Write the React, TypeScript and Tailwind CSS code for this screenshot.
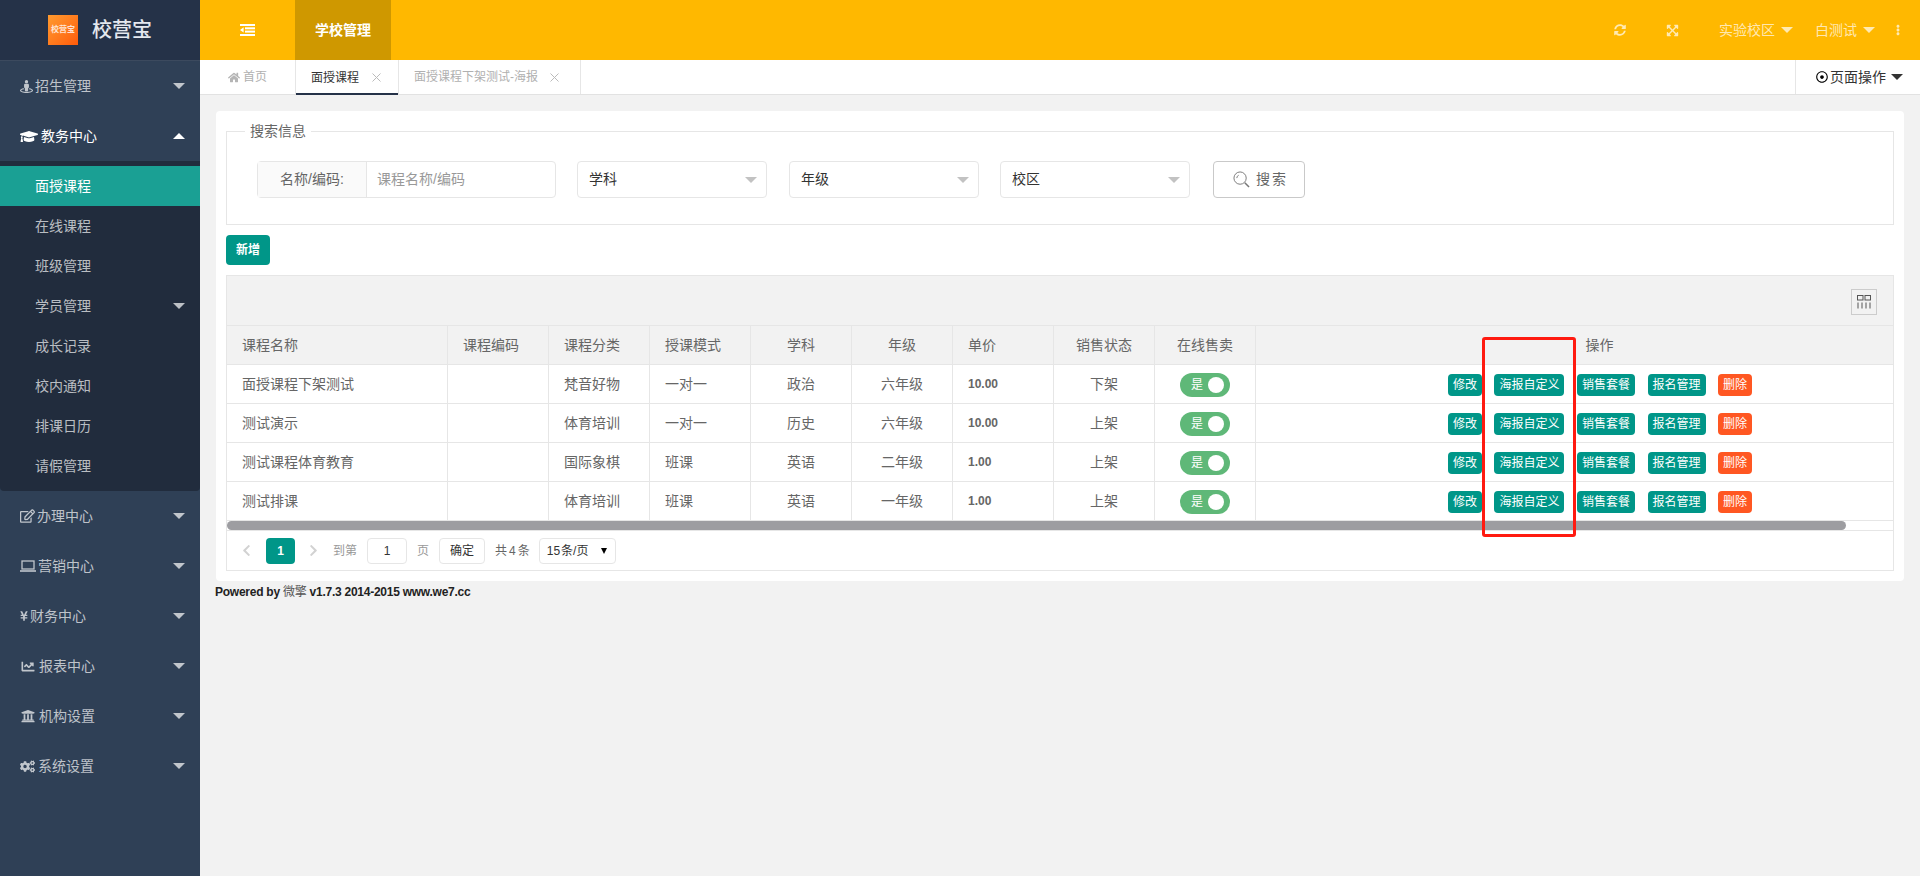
import type { ReactNode } from 'react';
import {
  FaStreetView,
  FaGraduationCap,
  FaRegEdit,
  FaYenSign,
  FaChartLine,
  FaUniversity,
  FaCogs,
  FaHome,
  FaSyncAlt,
  FaExpandArrowsAlt,
  FaEllipsisV,
  FaRegDotCircle,
  FaChevronLeft,
  FaChevronRight,
} from 'react-icons/fa';

const FONT = "font-['Liberation_Sans','Noto_Sans_CJK_SC',sans-serif]";

function LaptopIcon() {
  return (
    <svg viewBox="0 0 16 12" className="h-[12px] w-[16px]" fill="none" stroke="currentColor" strokeWidth="1.3">
      <rect x="2" y="1" width="12" height="8" />
      <path d="M0 11h16" strokeWidth="1.6" />
    </svg>
  );
}

function OutdentIcon() {
  return (
    <svg viewBox="0 0 15 12" className="h-[12px] w-[15px]" fill="currentColor">
      <rect x="0" y="0" width="15" height="2" />
      <rect x="5" y="3.3" width="10" height="2" />
      <rect x="5" y="6.6" width="10" height="2" />
      <rect x="0" y="10" width="15" height="2" />
      <path d="M3.6 3.3v5.3L0 6z" />
    </svg>
  );
}

function Caret({ up, className = 'border-t-white/70' }: { up?: boolean; className?: string }) {
  if (up) return <span className="h-0 w-0 border-x-[6px] border-b-[6px] border-x-transparent border-b-white" />;
  return <span className={`h-0 w-0 border-x-[6px] border-t-[6px] border-x-transparent ${className}`} />;
}

function MenuItem({ icon, label, gap, open }: { icon: ReactNode; label: string; gap: number; open?: boolean }) {
  return (
    <div className={`flex h-[50px] items-center pl-[20px] pr-[15px] ${open ? 'text-white' : 'text-white/70'}`}>
      <span className="flex items-center" style={{ width: gap }}>
        {icon}
      </span>
      <span className="flex-1">{label}</span>
      <Caret up={open} />
    </div>
  );
}

const subItems = ['面授课程', '在线课程', '班级管理', '学员管理', '成长记录', '校内通知', '排课日历', '请假管理'];

function Sidebar() {
  return (
    <aside className="flex w-[200px] shrink-0 flex-col bg-[#2f4056] text-[14px]">
      <div className="flex h-[61px] shrink-0 items-center border-b border-[#3c4a5e] bg-[#253248] pl-[48px]">
        <div className="flex h-[30px] w-[30px] items-center justify-center bg-gradient-to-br from-[#ff9a2e] to-[#ff5a08] text-[8px] font-bold text-white/80">
          校营宝
        </div>
        <span className="ml-[14px] text-[20px] font-medium text-[#e4e8ee]">校营宝</span>
      </div>
      <MenuItem icon={<FaStreetView className="h-[15px] w-[13px]" />} label="招生管理" gap={15} />
      <MenuItem icon={<FaGraduationCap className="h-[15px] w-[18px]" />} label="教务中心" gap={21} open />
      <div className="rounded-b-sm bg-[#212c3d] py-[5px]">
        {subItems.map((s, i) => (
          <div
            key={s}
            className={`flex h-[40px] items-center pl-[35px] pr-[15px] ${i === 0 ? 'bg-[#1aa094] text-white' : 'text-white/70'}`}
          >
            <span className="flex-1">{s}</span>
            {s === '学员管理' && <Caret />}
          </div>
        ))}
      </div>
      <MenuItem icon={<FaRegEdit className="h-[14px] w-[15px]" />} label="办理中心" gap={17} />
      <MenuItem icon={<LaptopIcon />} label="营销中心" gap={18} />
      <MenuItem icon={<FaYenSign className="h-[12px] w-[8px]" />} label="财务中心" gap={10} />
      <MenuItem icon={<FaChartLine className="h-[13px] w-[16px]" />} label="报表中心" gap={19} />
      <MenuItem icon={<FaUniversity className="h-[14px] w-[16px]" />} label="机构设置" gap={19} />
      <MenuItem icon={<FaCogs className="h-[13px] w-[15px]" />} label="系统设置" gap={18} />
    </aside>
  );
}

function TopBar() {
  return (
    <header className="flex h-[60px] shrink-0 items-center bg-[#ffb800] text-[14px]">
      <div className="flex w-[95px] items-center justify-center text-white">
        <OutdentIcon />
      </div>
      <div className="flex h-full w-[96px] items-center justify-center bg-[#cf9800] font-bold text-white">学校管理</div>
      <div className="flex-1" />
      <div className="flex items-center text-white/70">
        <FaSyncAlt className="h-[12px] w-[12px]" />
        <FaExpandArrowsAlt className="ml-[40px] h-[13px] w-[13px]" />
        <span className="ml-[40px]">实验校区</span>
        <span className="ml-[6px] flex"><Caret /></span>
        <span className="ml-[22px]">白测试</span>
        <span className="ml-[6px] flex"><Caret /></span>
        <FaEllipsisV className="ml-[21px] mr-[20px] h-[12px] w-[4px]" />
      </div>
    </header>
  );
}

function TabBar() {
  return (
    <div className="flex h-[35px] shrink-0 items-stretch border-b border-[#e2e2e2] bg-white text-[12px] text-[#b0b0b0]">
      <div className="flex w-[96px] items-center border-r border-[#e6e6e6] pl-[28px]">
        <FaHome className="mr-[3px] h-[11px] w-[12px] text-[#b5b5b5]" />
        首页
      </div>
      <div className="relative -mb-px flex w-[103px] items-center border-r border-[#e6e6e6] pl-[15px] text-[#333]">
        面授课程
        <span className="ml-[13px] text-[#bbb]"><CloseX /></span>
        <span className="absolute inset-x-0 bottom-0 h-[2px] bg-[#253248]" />
      </div>
      <div className="flex w-[182px] items-center border-r border-[#e6e6e6] pl-[15px]">
        面授课程下架测试-海报
        <span className="ml-[12px] text-[#bbb]"><CloseX /></span>
      </div>
      <div className="flex-1" />
      <div className="flex w-[125px] items-center border-l border-[#e6e6e6] pl-[20px] text-[14px] text-[#333]">
        <FaRegDotCircle className="mr-[2px] h-[12px] w-[12px] text-black" />
        页面操作
        <span className="ml-[5px] flex"><Caret className="border-t-[#333]" /></span>
      </div>
    </div>
  );
}

function CloseX() {
  return (
    <svg viewBox="0 0 9 9" className="h-[9px] w-[9px]" stroke="currentColor" strokeWidth="1">
      <path d="M.5.5l8 8M8.5.5l-8 8" />
    </svg>
  );
}

function SelectBox({ label, width, ml }: { label: string; width: number; ml: number }) {
  return (
    <div
      className="flex h-[37px] items-center justify-between rounded-sm border border-[#e6e6e6] pl-[11px] pr-[9px] text-[#333]"
      style={{ width, marginLeft: ml }}
    >
      {label}
      <Caret className="border-t-[#c2c2c2]" />
    </div>
  );
}

function SearchForm() {
  return (
    <fieldset className="border border-[#e6e6e6] pb-[26px] pt-[20px]">
      <legend className="ml-[18px] h-[20px] px-[5px] text-[14px] leading-[20px] text-[#666]">搜索信息</legend>
      <div className="flex pl-[30px] text-[14px]">
        <div className="flex h-[37px] w-[299px] rounded-sm border border-[#e6e6e6]">
          <div className="flex w-[109px] items-center justify-center border-r border-[#e6e6e6] bg-[#fafafa] text-[#666]">
            名称/编码:
          </div>
          <div className="flex flex-1 items-center pl-[10px] text-[#999]">课程名称/编码</div>
        </div>
        <SelectBox label="学科" width={190} ml={21} />
        <SelectBox label="年级" width={190} ml={22} />
        <SelectBox label="校区" width={190} ml={21} />
        <div className="ml-[23px] flex h-[37px] w-[92px] items-center justify-center rounded-sm border border-[#c9c9c9] pl-[3px] tracking-[2px] text-[#666]">
          <svg viewBox="0 0 18 18" className="mr-[6px] h-[17px] w-[17px]" fill="none" stroke="#777" strokeWidth="1">
            <circle cx="7.5" cy="7.5" r="6.5" />
            <path d="M12.5 12.5l4.5 4.5" strokeWidth="1.6" />
            <path d="M4 7.5a3.5 3.5 0 0 1 2-3" />
          </svg>
          搜索
        </div>
      </div>
    </fieldset>
  );
}

type Course = { name: string; cat: string; mode: string; subject: string; grade: string; price: string; status: string };

const courses: Course[] = [
  { name: '面授课程下架测试', cat: '梵音好物', mode: '一对一', subject: '政治', grade: '六年级', price: '10.00', status: '下架' },
  { name: '测试演示', cat: '体育培训', mode: '一对一', subject: '历史', grade: '六年级', price: '10.00', status: '上架' },
  { name: '测试课程体育教育', cat: '国际象棋', mode: '班课', subject: '英语', grade: '二年级', price: '1.00', status: '上架' },
  { name: '测试排课', cat: '体育培训', mode: '班课', subject: '英语', grade: '一年级', price: '1.00', status: '上架' },
];

const colWidths = [221, 101, 101, 101, 101, 101, 101, 101, 101, 688];
const cell = 'h-[39px] border-b border-r border-[#e6e6e6] px-[15px]';
const th = `${cell} font-normal`;
const tdRaised = `${cell} pt-[2px]`;

function ActionBtn({ label, danger }: { label: string; danger?: boolean }) {
  return (
    <span className={`inline-flex h-[22px] items-center rounded-sm px-[5px] text-[12px] text-white ${danger ? 'bg-[#ff5722]' : 'bg-[#009688]'}`}>
      {label}
    </span>
  );
}

function CourseTable() {
  return (
    <table className="w-[1717px] table-fixed border-separate border-spacing-0 text-[14px] text-[#666]">
      <colgroup>
        {colWidths.map((w, i) => (
          <col key={i} style={{ width: w }} />
        ))}
      </colgroup>
      <thead>
        <tr className="bg-[#f2f2f2]">
          <th className={`${th} text-left`}>课程名称</th>
          <th className={`${th} text-left`}>课程编码</th>
          <th className={`${th} text-left`}>课程分类</th>
          <th className={`${th} text-left`}>授课模式</th>
          <th className={`${th} text-center`}>学科</th>
          <th className={`${th} text-center`}>年级</th>
          <th className={`${th} text-left`}>单价</th>
          <th className={`${th} text-center`}>销售状态</th>
          <th className={`${th} text-center`}>在线售卖</th>
          <th className={`${th} text-center`}>操作</th>
        </tr>
      </thead>
      <tbody>
        {courses.map((c) => (
          <tr key={c.name}>
            <td className={cell}>{c.name}</td>
            <td className={cell} />
            <td className={cell}>{c.cat}</td>
            <td className={cell}>{c.mode}</td>
            <td className={`${cell} text-center`}>{c.subject}</td>
            <td className={`${cell} text-center`}>{c.grade}</td>
            <td className={`${cell} text-[12px] font-bold`}>{c.price}</td>
            <td className={`${cell} text-center`}>{c.status}</td>
            <td className={tdRaised}>
              <div className="mx-auto flex h-[24px] w-[50px] items-center justify-between rounded-full bg-[#5fb878] pl-[11px] pr-[6px] text-[12px] text-white">
                是
                <span className="h-[16px] w-[16px] rounded-full bg-white" />
              </div>
            </td>
            <td className={tdRaised}>
              <div className="flex justify-center gap-[12.5px] pl-[1px]">
                <ActionBtn label="修改" />
                <ActionBtn label="海报自定义" />
                <ActionBtn label="销售套餐" />
                <ActionBtn label="报名管理" />
                <ActionBtn label="删除" danger />
              </div>
            </td>
          </tr>
        ))}
      </tbody>
    </table>
  );
}

function Pager() {
  return (
    <div className="flex h-[39px] items-center pl-[15px] text-[12px] text-[#999]">
      <FaChevronLeft className="h-[13px] w-[9px] text-[#d2d2d2]" />
      <span className="ml-[15px] flex h-[26px] w-[29px] items-center justify-center rounded-sm bg-[#009688] font-bold text-white">1</span>
      <FaChevronRight className="ml-[14px] h-[13px] w-[9px] text-[#d2d2d2]" />
      <span className="ml-[15px]">到第</span>
      <span className="ml-[10px] flex h-[26px] w-[40px] items-center justify-center rounded-sm border border-[#e6e6e6] text-[#333]">1</span>
      <span className="ml-[10px]">页</span>
      <span className="ml-[10px] flex h-[26px] w-[46px] items-center justify-center rounded-sm border border-[#e6e6e6] text-[#333]">确定</span>
      <span className="ml-[10px] text-[#666]">
        共<span className="mx-[2px]">4</span>条
      </span>
      <span className="ml-[9px] flex h-[26px] w-[77px] items-center justify-between rounded-sm border border-[#e6e6e6] pl-[7px] pr-[8px] text-[#333]">
        <span>
          15<span className="ml-[1px]">条/页</span>
        </span>
        <span className="h-0 w-0 border-x-[3.5px] border-t-[6px] border-x-transparent border-t-black" />
      </span>
    </div>
  );
}

function ResultPanel() {
  return (
    <div className="mt-[10px] overflow-hidden border border-[#e6e6e6]">
      <div className="flex h-[50px] items-center justify-end border-b border-[#e6e6e6] bg-[#f2f2f2] pr-[16px] pt-[2px]">
        <div className="flex h-[26px] w-[26px] items-center justify-center border border-[#ccc]">
          <svg viewBox="0 0 14 14" className="h-[14px] w-[14px]" fill="none" stroke="#555" strokeWidth="1">
            <rect x=".5" y=".5" width="5.5" height="4.5" />
            <rect x="8" y=".5" width="5.5" height="4.5" />
            <path d="M1 7.5v6M5 7.5v6M9 7.5v6M13 7.5v6" />
          </svg>
        </div>
      </div>
      <div className="overflow-hidden">
        <CourseTable />
      </div>
      <div className="h-[10px] border-b border-[#e6e6e6] pr-[47px]">
        <div className="h-[9px] rounded-full bg-[#9d9da1]" />
      </div>
      <Pager />
    </div>
  );
}

export default function App() {
  return (
    <div className={`relative flex h-[876px] w-full overflow-hidden bg-[#f2f2f2] ${FONT}`}>
      <Sidebar />
      <main className="flex min-w-0 flex-1 flex-col">
        <TopBar />
        <TabBar />
        <div className="px-[16px] pt-[16px]">
          <div className="rounded-sm bg-white px-[10px] pb-[10px] pt-[10px]">
            <SearchForm />
            <button className="mt-[10px] flex h-[30px] w-[44px] items-center justify-center rounded-sm bg-[#009688] text-[12px] font-bold text-white">
              新增
            </button>
            <ResultPanel />
          </div>
          <p className="mt-[2px] -ml-px text-[12px] font-bold leading-[18px] tracking-[-0.25px] text-[#222]">
            Powered by <span className="font-normal text-[#555]">微擎</span> v1.7.3 2014-2015 www.we7.cc
          </p>
        </div>
      </main>
      <div className="absolute left-[1482px] top-[337px] h-[200px] w-[94px] rounded-[3px] border-[3px] border-[#ff1a10]" />
    </div>
  );
}
